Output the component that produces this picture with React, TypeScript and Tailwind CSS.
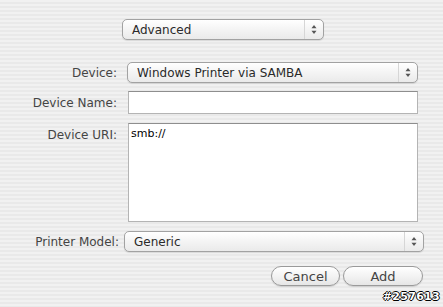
import React from 'react';

const FONT = "font-['DejaVu_Sans',_'Liberation_Sans',_sans-serif]";

function Arrows() {
  return (
    <svg width="6" height="11" viewBox="0 0 6 11" className="block">
      <path d="M3 1 L5.5 4.2 L0.5 4.2 Z" fill="#555555" />
      <path d="M3 10 L5.5 6.8 L0.5 6.8 Z" fill="#555555" />
    </svg>
  );
}

function PopUp({ text, className }: { text: string; className: string }) {
  return (
    <div
      className={`flex h-[21px] items-stretch rounded-[5px] border border-[#a2a2a2] bg-[linear-gradient(#ffffff,#f4f4f4_50%,#eaeaea)] shadow-[0_1px_1px_rgba(0,0,0,0.1)] ${className}`}
    >
      <div className="flex flex-1 items-center pl-[9px] text-[12px] text-[#2a2a2a]">{text}</div>
      <div className="flex w-[19px] items-center justify-center border-l border-[#d6d6d6]">
        <Arrows />
      </div>
    </div>
  );
}

function Label({ children, width }: { children: React.ReactNode; width: string }) {
  return <div className={`${width} shrink-0 text-right text-[12px] text-[#444444]`}>{children}</div>;
}

function PillButton({ children, className }: { children: React.ReactNode; className: string }) {
  return (
    <button
      className={`h-[20px] rounded-full border border-[#9a9a9a] bg-[linear-gradient(#ffffff,#f3f3f3_50%,#e6e6e6)] text-[13px] leading-none text-[#444444] shadow-[0_1px_1px_rgba(0,0,0,0.12)] ${className}`}
    >
      {children}
    </button>
  );
}

export default function App() {
  return (
    <div
      className={`relative flex h-[307px] w-[443px] flex-col overflow-hidden bg-[repeating-linear-gradient(#f1f1f1_0px,#f1f1f1_2px,#e9e9e9_2px,#e9e9e9_4px)] ${FONT}`}
    >
      <div className="mt-[19px] flex pl-[122px]">
        <PopUp text="Advanced" className="w-[202px]" />
      </div>

      <div className="mt-[22px] flex items-center">
        <Label width="w-[117px]">Device:</Label>
        <PopUp text="Windows Printer via SAMBA" className="ml-[10px] w-[291px]" />
      </div>

      <div className="mt-[8px] flex items-center">
        <Label width="w-[117px]">Device Name:</Label>
        <div className="ml-[11px] h-[23px] w-[290px] border border-[#b4b4b4] border-t-[#8e8e8e] bg-white" />
      </div>

      <div className="mt-[9px] flex items-start">
        <Label width="w-[117px] pt-[3px]">Device URI:</Label>
        <div className="ml-[11px] h-[99px] w-[290px] border border-[#b4b4b4] border-t-[#8e8e8e] bg-white pl-[2px] pt-[2px] text-[11px] text-black">
          smb://
        </div>
      </div>

      <div className="mt-[9px] flex items-center">
        <Label width="w-[119px]">Printer Model:</Label>
        <PopUp text="Generic" className="ml-[5px] w-[300px]" />
      </div>

      <div className="mt-[14px] flex gap-[3px] pl-[271px]">
        <PillButton className="w-[69px]">Cancel</PillButton>
        <PillButton className="w-[80px]">Add</PillButton>
      </div>

      <div className="absolute bottom-[2px] right-[3px] font-['DejaVu_Sans'] text-[11px] font-bold tracking-[0.3px] text-white [text-shadow:-1px_0_#000,1px_0_#000,0_-1px_#000,0_1px_#000]">
        #257613
      </div>
    </div>
  );
}
